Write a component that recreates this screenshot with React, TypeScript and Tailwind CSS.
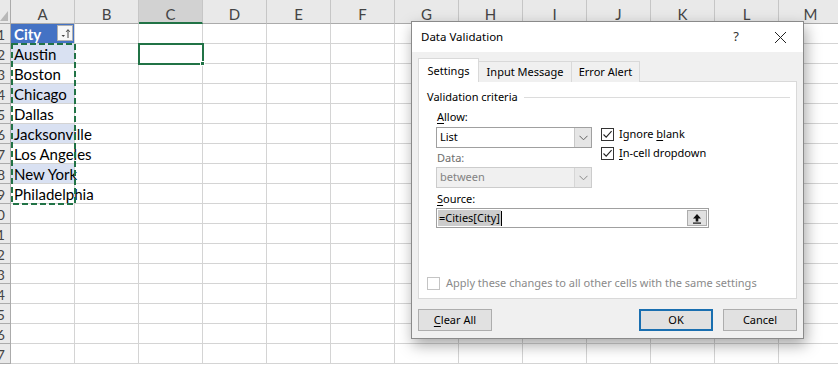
import React from 'react';

const COLS = ['A', 'B', 'C', 'D', 'E', 'F', 'G', 'H', 'I', 'J', 'K', 'L', 'M'];
const CITIES = ['Austin', 'Boston', 'Chicago', 'Dallas', 'Jacksonville', 'Los Angeles', 'New York', 'Philadelphia'];
const ROWS = Array.from({ length: 17 }, (_, i) => i + 1);

const Check = ({ on = true, disabled = false }: { on?: boolean; disabled?: boolean }) => (
  <span
    className={`flex h-[13px] w-[13px] shrink-0 items-center justify-center border bg-white ${
      disabled ? 'border-[#c4c4c4]' : 'border-[#333333]'
    }`}
  >
    {on && (
      <svg width="11" height="11" viewBox="0 0 11 11">
        <path d="M1.5 5.5 L4.2 8.2 L9.6 2.2" fill="none" stroke="#222" strokeWidth="1.1" />
      </svg>
    )}
  </span>
);

const Chevron = ({ color = '#606060' }: { color?: string }) => (
  <svg width="9" height="6" viewBox="0 0 9 6">
    <path d="M0.5 0.8 L4.5 4.8 L8.5 0.8" fill="none" stroke={color} strokeWidth="1" />
  </svg>
);

const Sheet = () => (
  <div className="font-['Lato',sans-serif] text-[15px] text-black">
    {/* column headers */}
    <div className="flex h-[24px]">
      <div className="relative w-[11px] shrink-0 border-r border-b border-[#ababab] bg-[#e9e9e9]">
        <svg className="absolute bottom-[2px] right-[2px]" width="8" height="10" viewBox="0 0 8 10">
          <polygon points="8,0 8,10 0,10" fill="#b8b8b8" />
        </svg>
      </div>
      {COLS.map((c) => (
        <div
          key={c}
          className={`flex w-[64px] shrink-0 items-center justify-center border-r pt-[6px] text-[#444] ${
            c === 'C'
              ? 'border-b-2 border-r-[#c6c6c6] border-b-[#217346] bg-[#d2d2d2]'
              : 'border-b border-[#c6c6c6] border-b-[#ababab] bg-[#e9e9e9]'
          }`}
        >
          {c}
        </div>
      ))}
    </div>
    {ROWS.map((r) => (
      <div key={r} className="flex h-[20px]">
        <div className="flex w-[11px] shrink-0 items-end justify-end overflow-hidden border-r border-b border-[#ababab] bg-[#e9e9e9] pr-[5px] text-[14px] leading-[17px] text-[#444]">
          <span className="whitespace-nowrap">{r}</span>
        </div>
        {COLS.map((c) => {
          const isA = c === 'A';
          const header = isA && r === 1;
          const city = isA && r >= 2 ? CITIES[r - 2] : null;
          const banded = city && r % 2 === 0;
          return (
            <div
              key={c}
              className={`flex w-[64px] shrink-0 items-end border-r border-b border-[#d4d4d4] ${
                header ? 'relative bg-[#4472c4]' : banded ? 'bg-[#d9e1f2]' : ''
              }`}
            >
              {header && (
                <>
                  <span className="pl-[3px] font-bold leading-[17px] text-white">City</span>
                  <span className="absolute right-[1px] top-[1px] flex h-[16px] w-[16px] items-center justify-center border border-[#b0b0b0] bg-[#f7f7f7]">
                    <svg width="11" height="11" viewBox="0 0 11 11">
                      <path d="M1.5 7 L5 7 L3.25 9 Z" fill="#444" />
                      <path d="M8 10 L8 2" stroke="#444" strokeWidth="1" />
                      <path d="M6.2 3.8 L8 1.6 L9.8 3.8" fill="none" stroke="#444" strokeWidth="1" />
                    </svg>
                  </span>
                </>
              )}
              {city && <span className="whitespace-nowrap pl-[3px] leading-[17px]">{city}</span>}
            </div>
          );
        })}
      </div>
    ))}
  </div>
);

const Dialog = () => (
  <div className="absolute left-[411px] top-[21px] flex h-[318px] w-[393px] flex-col border border-[#8a8a8a] bg-white font-['Noto_Sans',sans-serif] text-[11px] text-black shadow-[2px_6px_14px_rgba(0,0,0,0.35)]">
    {/* title bar */}
    <div className="flex h-[30px] shrink-0 items-center bg-white pl-[9px] text-[11.5px]">
      <span>Data Validation</span>
      <span className="ml-auto mr-[11px] w-[20px] text-center text-[13px] text-[#333]">?</span>
      <span className="flex h-[30px] w-[46px] items-center justify-center">
        <svg width="13" height="13" viewBox="0 0 13 13">
          <path d="M1 1 L12 12 M12 1 L1 12" stroke="#222" strokeWidth="1" />
        </svg>
      </span>
    </div>
    {/* body */}
    <div className="flex flex-1 flex-col bg-[#f0f0f0] px-[6px] pt-[6px]">
      {/* tabs */}
      <div className="relative z-10 -mb-px flex items-end">
        <div className="flex h-[24px] w-[61px] items-center justify-center border border-b-0 border-[#d9d9d9] bg-white pt-[2px]">
          Settings
        </div>
        <div className="flex h-[21px] w-[93px] items-center justify-center border-t border-r border-[#d9d9d9] bg-[#f0f0f0] pt-[1px]">
          Input Message
        </div>
        <div className="flex h-[21px] w-[68px] items-center justify-center border-t border-r border-[#d9d9d9] bg-[#f0f0f0] pt-[1px]">
          Error Alert
        </div>
      </div>
      {/* panel */}
      <div className="flex h-[218px] flex-col border border-[#d9d9d9] bg-white pt-[7px]">
        <div className="flex h-[16px] items-center gap-[6px] pl-[8px] pr-[6px]">
          <span className="whitespace-nowrap">Validation criteria</span>
          <span className="h-px flex-1 bg-[#dcdcdc]" />
        </div>
        <div className="mt-[4px] flex pl-[17px]">
          <div className="flex w-[156px] flex-col">
            <span className="flex h-[16px] items-center pl-px">
              <u className="underline-offset-2">A</u>llow:
            </span>
            <div className="mt-[2px] flex h-[21px] border border-[#a0a0a0] bg-white">
              <span className="flex flex-1 items-center pl-[3px]">List</span>
              <span className="flex w-[17px] items-center justify-center border-l border-[#c8c8c8] bg-[#e5e5e5]">
                <Chevron />
              </span>
            </div>
            <span className="mt-[2px] flex h-[16px] items-center pl-px text-[#6d6d6d]">Data:</span>
            <div className="mt-px flex h-[21px] border border-[#cccccc] bg-[#f0f0f0]">
              <span className="flex flex-1 items-center pl-[3px] text-[#838383]">between</span>
              <span className="flex w-[17px] items-center justify-center border-l border-[#d6d6d6] bg-[#e8e8e8]">
                <Chevron color="#8a8a8a" />
              </span>
            </div>
          </div>
          <div className="ml-[9px] flex flex-col gap-[2px] pt-[17px]">
            <label className="flex h-[17px] items-center gap-[5px]">
              <Check />
              <span>
                Ignore <u className="underline-offset-2">b</u>lank
              </span>
            </label>
            <label className="flex h-[17px] items-center gap-[5px]">
              <Check />
              <span>
                <u className="underline-offset-2">I</u>n-cell dropdown
              </span>
            </label>
          </div>
        </div>
        <div className="flex flex-col pl-[17px]">
          <span className="mt-[3px] flex h-[16px] items-center pl-px">
            <u className="underline-offset-2">S</u>ource:
          </span>
          <div className="mt-px flex h-[20px] w-[273px] border border-[#a0a0a0] bg-white">
            <span className="flex flex-1 items-center pl-[1px]">
              <span className="bg-[#cccccc] px-px leading-[16px]">=Cities[City]</span>
              <span className="h-[15px] w-px bg-black" />
            </span>
            <span className="my-px mr-px flex w-[20px] items-center justify-center border border-[#adadad] bg-[#e1e1e1]">
              <svg width="10" height="11" viewBox="0 0 10 11">
                <path d="M5 1 L9 5.5 L6.3 5.5 L6.3 8.5 L3.7 8.5 L3.7 5.5 L1 5.5 Z" fill="#111" />
                <rect x="1" y="9.5" width="8" height="1.2" fill="#111" />
              </svg>
            </span>
          </div>
        </div>
        <label className="mt-auto mb-[7px] flex h-[16px] items-center gap-[6px] pl-[8px] text-[#8a8a8a]">
          <Check on={false} disabled />
          <span className="whitespace-nowrap">Apply these changes to all other cells with the same settings</span>
        </label>
      </div>
      {/* footer */}
      <div className="mt-[10px] flex items-center">
        <button className="flex h-[22px] w-[74px] items-center justify-center border border-[#adadad] bg-[#e1e1e1]">
          <span>
            <u className="underline-offset-2">C</u>lear All
          </span>
        </button>
        <button className="ml-auto flex h-[22px] w-[74px] items-center justify-center border-2 border-[#1a6fb0] bg-[#e1e1e1]">
          OK
        </button>
        <button className="ml-[10px] flex h-[22px] w-[74px] items-center justify-center border border-[#adadad] bg-[#e1e1e1]">
          Cancel
        </button>
      </div>
    </div>
  </div>
);

export default function App() {
  return (
    <div className="relative h-[367px] w-[838px] overflow-hidden bg-white">
      <Sheet />
      {/* copy range marching ants */}
      <svg className="absolute left-[11px] top-[43px]" width="65" height="162">
        <rect x="1" y="1" width="63" height="160" fill="none" stroke="#217346" strokeWidth="2" strokeDasharray="6 3" />
      </svg>
      {/* active cell C2 */}
      <div className="absolute left-[138px] top-[43px] h-[22px] w-[66px] border-2 border-[#217346]">
        <span className="absolute -bottom-[3px] -right-[3px] h-[5px] w-[5px] border border-white bg-[#217346]" />
      </div>
      <Dialog />
    </div>
  );
}
